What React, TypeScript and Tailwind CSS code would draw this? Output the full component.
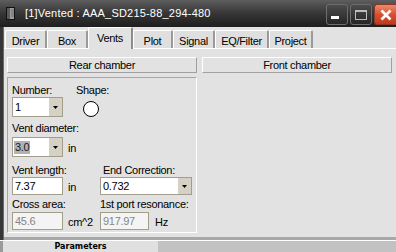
import React from "react";

const FONT = "font-['Liberation_Sans',Arial,sans-serif]";

const TABS = [
  { label: "Driver", cls: "w-[42px]" },
  { label: "Box", cls: "w-[41px]" },
  { label: "Vents", cls: "w-[45px]", active: true },
  { label: "Plot", cls: "w-[40px]" },
  { label: "Signal", cls: "w-[42px]" },
  { label: "EQ/Filter", cls: "w-[54px]" },
  { label: "Project", cls: "w-[44px]" },
];

function DropArrow() {
  return (
    <div className="flex w-[13px] shrink-0 items-center justify-center bg-[#d5d1c5]">
      <svg width="5" height="3" viewBox="0 0 5 3">
        <path d="M0 0h5L2.5 3z" fill="#000" />
      </svg>
    </div>
  );
}

function Combo({ value, cls, selected }: { value: string; cls: string; selected?: boolean }) {
  return (
    <div className={`flex border border-[#a39d8c] bg-white ${cls}`}>
      <div className="flex flex-1 items-center pl-[1px]">
        <span className={selected ? "bg-[#b2b2b2] px-[1px] text-[#1a1a1a]" : "px-[1px] text-black"}>{value}</span>
      </div>
      <DropArrow />
    </div>
  );
}

function Field({ value, cls, disabled }: { value: string; cls: string; disabled?: boolean }) {
  return (
    <div
      className={`flex items-center border border-[#a39d8c] pl-[2px] ${cls} ${
        disabled ? "bg-[#f4f4f4] text-[#858585]" : "bg-white text-black"
      }`}
    >
      {value}
    </div>
  );
}

export default function App() {
  return (
    <div className={`flex h-[252px] w-[396px] flex-col overflow-hidden bg-[#e2e2e2] ${FONT}`}>
      {/* title bar */}
      <div className="flex h-[27px] shrink-0 items-center bg-linear-to-b from-[#5e5e5e] via-[#363636] to-[#1e1e1e]">
        <svg className="ml-[6px]" width="9" height="13" viewBox="0 0 9 13">
          <rect x="0.5" y="0.5" width="8" height="12" fill="#9c9c9c" stroke="#111" />
          <rect x="1" y="1" width="3" height="11" fill="#5a5a5a" />
          <path d="M5 3h3M5 5h3M5 7h3M5 9h3" stroke="#6f6f6f" strokeWidth="1" />
        </svg>
        <span className="ml-[10px] text-[11px] tracking-[0.2px] text-white">[1]Vented : AAA_SD215-88_294-480</span>
        <div className="ml-auto flex h-[21px] gap-[2px] self-start mt-[4px]">
          <div className="relative h-[21px] w-[22px] rounded-[3px] border border-[#6e6e6e] bg-linear-to-b from-[#4c4c4c] to-[#262626]">
            <div className="absolute left-[4px] top-[11px] h-[3px] w-[8px] bg-white" />
          </div>
          <div className="flex h-[21px] w-[22px] items-center justify-center rounded-[3px] border border-[#6e6e6e] bg-linear-to-b from-[#4c4c4c] to-[#262626]">
            <div className="h-[10px] w-[12px] border border-t-2 border-[#bdbdbd]" />
          </div>
          <div className="flex h-[21px] w-[22px] items-center justify-center rounded-l-[3px] border border-r-0 border-[#8a3a28] bg-linear-to-b from-[#ec8a6c] via-[#d9502f] to-[#c23a1c]">
            <svg width="12" height="12" viewBox="0 0 12 12">
              <path d="M1.5 1.5l9 9M10.5 1.5l-9 9" stroke="#fff" strokeWidth="2.6" />
            </svg>
          </div>
        </div>
      </div>

      {/* body */}
      <div className="flex h-[213px] shrink-0">
        <div className="w-[4px] shrink-0 border-r border-[#6a6a6a] bg-[#363636]" />
        <div className="flex flex-1 flex-col">
          {/* tabs */}
          <div className="flex h-[21px] shrink-0 items-end pl-[1px] text-[11px] tracking-[-0.3px] text-black">
            {TABS.map((t) =>
              t.active ? (
                <div
                  key={t.label}
                  className={`relative z-10 -mb-px flex h-[22px] justify-center rounded-t-[2px] border-l border-r-2 border-t border-l-white border-r-[#8c8c8c] border-t-white bg-[#e2e2e2] pt-[2px] ${t.cls}`}
                >
                  {t.label}
                </div>
              ) : (
                <div
                  key={t.label}
                  className={`flex h-[18px] justify-center rounded-t-[2px] border-l border-r-2 border-t border-l-white border-r-[#9a9a9a] border-t-white bg-[#dfdfdf] pt-[2px] ${t.cls}`}
                >
                  {t.label}
                </div>
              )
            )}
          </div>

          {/* panel */}
          <div className="flex flex-1 flex-col border-b-[3px] border-t border-b-[#a8a8a8] border-t-white pl-[3px] pt-[8px] text-[11px] leading-[13px] tracking-[-0.3px] text-black">
            <div className="flex gap-[5px]">
              <div className="flex h-[16px] w-[190px] items-center justify-center border border-b-[#a0a0a0] border-l-white border-r-[#a0a0a0] border-t-white">
                Rear chamber
              </div>
              <div className="flex h-[16px] w-[190px] items-center justify-center border border-b-[#a0a0a0] border-l-white border-r-[#a0a0a0] border-t-white">
                Front chamber
              </div>
            </div>

            <div className="mt-[4px] h-[156px] w-[190px] border border-b-white border-l-[#a6a6a6] border-r-white border-t-[#a6a6a6] pl-[4px] pt-[6px]">
              <div className="flex">
                <div className="w-[64px]">
                  <div>Number:</div>
                  <Combo value="1" cls="h-[20px] w-[51px]" />
                </div>
                <div>
                  <div>Shape:</div>
                  <div className="ml-[7px] mt-[4px] h-[16px] w-[16px] rounded-full border-[1.5px] border-black bg-white" />
                </div>
              </div>

              <div className="mt-[5px]">Vent diameter:</div>
              <div className="mt-[2px] flex items-end">
                <Combo value="3.0" cls="h-[20px] w-[51px]" selected />
                <span className="mb-[2px] ml-[5px]">in</span>
              </div>

              <div className="mt-[7px] flex">
                <div className="w-[88px]">
                  <div>Vent length:</div>
                  <div className="flex items-end">
                    <Field value="7.37" cls="h-[18px] w-[51px]" />
                    <span className="mb-[1px] ml-[5px]">in</span>
                  </div>
                </div>
                <div>
                  <div className="ml-[3px]">End Correction:</div>
                  <Combo value="0.732" cls="h-[18px] w-[92px]" />
                </div>
              </div>

              <div className="mt-[3px] flex">
                <div className="w-[88px]">
                  <div>Cross area:</div>
                  <div className="mt-[1px] flex items-end">
                    <Field value="45.6" cls="h-[18px] w-[51px]" disabled />
                    <span className="mb-[1px] ml-[5px]">cm^2</span>
                  </div>
                </div>
                <div>
                  <div>1st port resonance:</div>
                  <div className="mt-[1px] flex items-end">
                    <Field value="917.97" cls="h-[18px] w-[49px]" disabled />
                    <span className="mb-[1px] ml-[6px]">Hz</span>
                  </div>
                </div>
              </div>
            </div>
          </div>
        </div>
      </div>

      {/* bottom tab strip */}
      <div className="flex flex-1 border-t border-white bg-[#c2c2c2]">
        <div className="flex w-[158px] items-center justify-center border-l-[3px] border-[#9a9a9a] bg-[#e0e0e0] font-['DejaVu_Sans',sans-serif] text-[8px] font-bold leading-none text-black">
          Parameters
        </div>
      </div>
    </div>
  );
}
